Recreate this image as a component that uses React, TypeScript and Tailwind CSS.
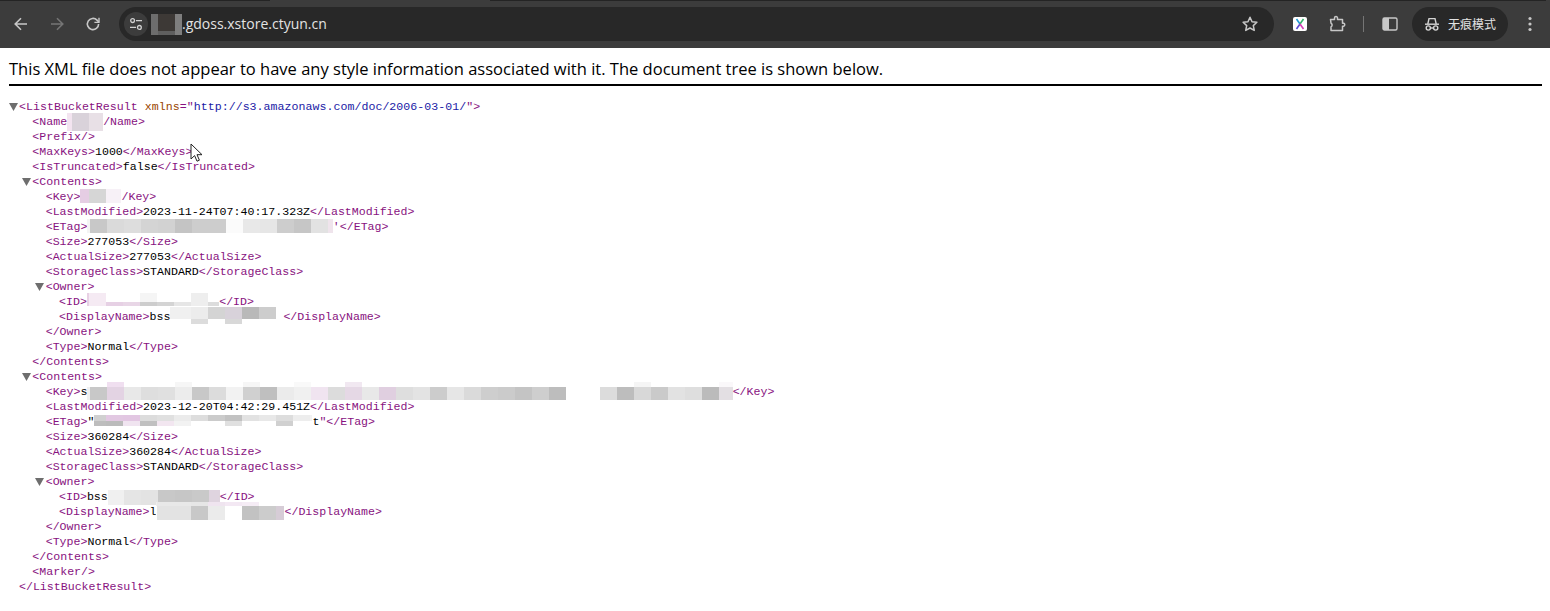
import React from "react";

const TAG = "text-[#881280]";
type Cell = [number, string, string?, string?];
type Piece = string | { text: string } | { attr: string } | { val: string } | { m: Cell[]; mt: number; h: number; top?: number; bot?: number };

const m = (mt: number, h: number, top: number, cells: Cell[], bot = 0) => ({ m: cells, mt, h, top, bot });

const Mosaic = ({ cells, mt, h, top = 0, bot = 0 }: { cells: Cell[]; mt: number; h: number; top?: number; bot?: number }) => (
  <span className="inline-flex items-start h-[15px] shrink-0">
    {cells.map((c, i) => (
      <span key={i} className="flex flex-col" style={{ width: c[0], marginTop: mt + 1 }}>
        <span style={{ height: top, background: c[2] ?? "transparent" }} />
        <span style={{ height: h, background: c[1] }} />
        <span style={{ height: bot, background: c[3] ?? "transparent" }} />
      </span>
    ))}
  </span>
);

const Caret = () => (
  <svg className="w-[9px] h-[8px] -ml-[10.5px] mr-[1.5px] shrink-0" viewBox="0 0 9 8">
    <path d="M0 0h9L4.5 8z" fill="#6e6e6e" />
  </svg>
);

const Row = ({ level, open, parts, wide }: { level: number; open?: boolean; parts: Piece[]; wide?: boolean }) => (
  <div className={`flex items-center h-[15px] whitespace-pre ${wide ? "tracking-[0.03px]" : ""}`} style={{ paddingLeft: 19 + level * 13.35 }}>
    {open && <Caret />}
    {parts.map((p, i) => {
      if (typeof p === "string") return <span key={i} className={TAG}>{p}</span>;
      if ("text" in p) return <span key={i} className="text-black">{p.text}</span>;
      if ("attr" in p) return <span key={i} className="text-[#994500]">{p.attr}</span>;
      if ("val" in p) return <span key={i} className="text-[#1a1aa6]">{p.val}</span>;
      return <Mosaic key={i} cells={p.m} mt={p.mt} h={p.h} top={p.top} bot={p.bot} />;
    })}
  </div>
);

const t = (text: string) => ({ text });

const xml: { level: number; open?: boolean; wide?: boolean; parts: Piece[] }[] = [
  { level: 0, open: true, wide: true, parts: ["<ListBucketResult", " ", { attr: "xmlns" }, "=\"", { val: "http://s3.amazonaws.com/doc/2006-03-01/" }, "\">"] },
  { level: 1, parts: ["<Name", m(-2, 18, 0, [[5, "#f3e4f0"], [17, "#d9d2da"], [14, "#e8e0e6"]]), "/Name>"] },
  { level: 1, parts: ["<Prefix/>"] },
  { level: 1, parts: ["<MaxKeys>", t("1000"), "</MaxKeys>"] },
  { level: 1, parts: ["<IsTruncated>", t("false"), "</IsTruncated>"] },
  { level: 1, open: true, parts: ["<Contents>"] },
  { level: 2, parts: ["<Key>", m(-1, 14, 0, [[9, "#e5cde3"], [17, "#d6d6d6"], [15, "#f7f1f7"]]), "/Key>"] },
  { level: 2, parts: ["<LastModified>", t("2023-11-24T07:40:17.323Z"), "</LastModified>"] },
  { level: 2, parts: ["<ETag>", m(-1, 14, 0, [[2.4, "#f4f4f4"], [17, "#c8c8c8"], [17, "#dadada"], [17, "#dddddd"], [17, "#d4d4d4"], [17, "#d2d2d2"], [17, "#c4c4c4"], [17, "#cdcdcd"], [17, "#cdcdcd"], [17, "#fbfbfb"], [17, "#e8e8e8"], [17, "#e6e6e6"], [17, "#cdcdcd"], [17, "#c6c6c6"], [17, "#e2e2e2"], [5, "#efe4ec"]]), "'</ETag>"] },
  { level: 2, parts: ["<Size>", t("277053"), "</Size>"] },
  { level: 2, parts: ["<ActualSize>", t("277053"), "</ActualSize>"] },
  { level: 2, parts: ["<StorageClass>", t("STANDARD"), "</StorageClass>"] },
  { level: 2, open: true, parts: ["<Owner>"] },
  { level: 3, parts: ["<ID>", m(-2, 4, 9, [[2.3, "#e8d0e4", "#e8d0e4"], [17, "#f5eaf3", "#f5eaf3"], [17, "#e6d0e4", "#fff"], [17, "#e8d6e6", "#fff"], [17, "#cdcdcd", "#f5f5f5"], [17, "#d4d4d4", "#fff"], [17, "#e6e6e6", "#fff"], [17, "#eeeeee", "#eeeeee"], [11, "#dcdcdc", "#fff"]]), "</ID>"] },
  { level: 3, parts: ["<DisplayName>", t("bss"), m(-3, 12, 0, [[21, "#f0f0f0"], [17, "#ececec", undefined, "#dcdcdc"], [17, "#d4d4d4"], [17, "#d8d2da", undefined, "#d8d8d8"], [17, "#b9b9b9"], [17, "#cdcdcd"], [7, "#fff"]], 5), "</DisplayName>"] },
  { level: 2, parts: ["</Owner>"] },
  { level: 2, parts: ["<Type>", t("Normal"), "</Type>"] },
  { level: 1, parts: ["</Contents>"] },
  { level: 1, open: true, parts: ["<Contents>"] },
  { level: 2, parts: ["<Key>", t("s"), m(-3, 13, 5, [[2.2, "#f0f0f0"], [17, "#c8c8c8"], [17, "#e3d3e3", "#f0dff0"], [17, "#e8e8e8"], [17, "#dedede"], [17, "#e0e0e0"], [17, "#ececec", "#f6f6f6"], [17, "#c8c8c8"], [17, "#dcdcdc"], [17, "#f2f2f2"], [17, "#d0d0d0", "#f6f6f6"], [17, "#bfbfbf"], [17, "#ebebeb"], [17, "#f0f0f0", "#f9f9f9"], [17, "#f0e4f0"], [17, "#dcdcdc"], [17, "#e5d8e5", "#f1e8f1"], [17, "#e8e8e8"], [17, "#e0cfe0"], [17, "#dedede"], [17, "#e3e3e3"], [17, "#cccccc"], [17, "#e6e6e6"], [17, "#dadada"], [17, "#cecece"], [17, "#cbcbcb"], [17, "#c4c4c4"], [17, "#cecece"], [17, "#bdbdbd"], [34, "#fff"], [17, "#dcdcdc"], [17, "#bdbdbd"], [17, "#d8d8d8", "#f5f5f5"], [17, "#cacaca"], [17, "#e2e2e2"], [17, "#dedede"], [17, "#bbbbbb"], [14, "#e3dfe3", "#faf8fa"]]), "</Key>"] },
  { level: 2, parts: ["<LastModified>", t("2023-12-20T04:42:29.451Z"), "</LastModified>"] },
  { level: 2, parts: ["<ETag>", t("\""), m(0, 5, 6, [[12, "#bdbdbd", "#d0d0d0"], [17, "#bbbbbb", "#e2c8e2"], [17, "#f0e4f0", "#e2c6e2"], [17, "#c0c0c0", "#dcdcdc"], [17, "#f2e6f0", "#e0e0e0"], [17, "#f2f2f2", "#ebebeb"], [17, "#ffffff", "#dddddd"], [17, "#ffffff", "#cbcbcb"], [17, "#e0e0e0", "#c2c2c2"], [17, "#ffffff", "#e2e2e2"], [17, "#ffffff", "#e8e8e8"], [17, "#d0d0d0", "#dddddd"], [17, "#ffffff", "#ededed"], [2, "#ffffff", "#f2f2f2"]]), t("t"), "\"</ETag>"] },
  { level: 2, parts: ["<Size>", t("360284"), "</Size>"] },
  { level: 2, parts: ["<ActualSize>", t("360284"), "</ActualSize>"] },
  { level: 2, parts: ["<StorageClass>", t("STANDARD"), "</StorageClass>"] },
  { level: 2, open: true, parts: ["<Owner>"] },
  { level: 3, parts: ["<ID>", t("bss"), m(0, 15, 0, [[16, "#f0f0f0"], [17, "#e5e5e5"], [17, "#e3e3e3"], [17, "#c8c8c8"], [17, "#c6c6c6"], [17, "#c9c9c9"], [11, "#dfd4df"]]), "</ID>"] },
  { level: 3, parts: ["<DisplayName>", t("l"), m(-3, 14, 4, [[1, "#fff", "#eeeeee"], [17, "#e3e3e3", "#e8e8e8"], [17, "#e3e3e3", "#e8e8e8"], [17, "#c8c8c8", "#e6e6e6"], [17, "#ebebeb", "#efe4ef"], [17, "#fff", "#f3e8f3"], [17, "#c2c2c2", "#f5ecf5"], [17, "#cccccc", "#fff"], [8, "#d6ccd6", "#fff"]]), "</DisplayName>"] },
  { level: 2, parts: ["</Owner>"] },
  { level: 2, parts: ["<Type>", t("Normal"), "</Type>"] },
  { level: 1, parts: ["</Contents>"] },
  { level: 1, parts: ["<Marker/>"] },
  { level: 0, parts: ["</ListBucketResult>"] },
];

const IconBtn = ({ children, className = "" }: { children: React.ReactNode; className?: string }) => (
  <div className={`w-9 h-9 flex items-center justify-center shrink-0 ${className}`}>{children}</div>
);

const Toolbar = () => (
  <div className="relative h-[48px] bg-[#3c3c3c] flex items-center pl-[3px] pr-[2px] shrink-0" style={{ fontFamily: '"Open Sans", "Noto Sans CJK SC", sans-serif' }}>
    <div className="absolute left-0 top-0 w-[270px] h-px bg-[#242424]" />
    <div className="absolute left-[490px] right-[4px] top-0 h-px bg-[#242424]" />
    <IconBtn>
      <svg width="16" height="16" viewBox="0 0 16 16" fill="none" stroke="#c7c7c7" strokeWidth="1.6"><path d="M14 8H2.5M8 2.2 2.2 8 8 13.8" /></svg>
    </IconBtn>
    <IconBtn>
      <svg width="16" height="16" viewBox="0 0 16 16" fill="none" stroke="#757575" strokeWidth="1.6"><path d="M2 8h11.5M8 2.2 13.8 8 8 13.8" /></svg>
    </IconBtn>
    <IconBtn>
      <svg width="16" height="16" viewBox="0 0 16 16" fill="none" stroke="#c7c7c7" strokeWidth="1.6"><path d="M13.6 8a5.6 5.6 0 1 1-1.6-3.9L13.8 6" /><path d="M14 1.8V6.4H9.4" strokeWidth="1.4" /></svg>
    </IconBtn>
    <div className="ml-[8px] h-[34px] w-[1155px] rounded-full bg-[#282828] flex items-center pl-[5px] pr-[15px] shrink-0">
      <div className="w-6 h-6 rounded-full bg-[#3c3c3c] flex items-center justify-center shrink-0">
        <svg width="14" height="14" viewBox="0 0 14 14" fill="none" stroke="#d0d0d0" strokeWidth="1.3"><circle cx="3.6" cy="3.6" r="1.9" /><path d="M7 3.6h6M1 10.4h6" /><circle cx="10.4" cy="10.4" r="1.9" /></svg>
      </div>
      <div className="ml-[3px] flex flex-col w-[31px] h-[21px] shrink-0">
        <div className="h-[17px] flex">
          <div className="w-[7px] bg-[#6d6d6d]" />
          <div className="w-[17px] bg-[#3d3936]" />
          <div className="w-[7px] bg-[#7e7e7e]" />
        </div>
        <div className="h-[4px] flex">
          <div className="w-[7px] bg-[#6d6d6d]" />
          <div className="w-[17px] bg-[#5f5f5f]" />
          <div className="w-[7px] bg-[#7e7e7e]" />
        </div>
      </div>
      <span className="text-[14px] text-[#e3e3e3] pb-[2px]" style={{ fontFamily: '"Open Sans", sans-serif' }}>.gdoss.xstore.ctyun.cn</span>
      <svg className="ml-auto" width="18" height="18" viewBox="0 0 24 24" fill="none" stroke="#c7c7c7" strokeWidth="2" strokeLinejoin="round"><path d="m12 3 2.7 6 6.5.7-4.8 4.4 1.3 6.4L12 17.3 6.3 20.5l1.3-6.4L2.8 9.7 9.3 9z" /></svg>
    </div>
    <div className="ml-[19px] w-[14px] h-[14px] bg-white rounded-[2px] flex items-center justify-center shrink-0">
      <svg width="12" height="12" viewBox="0 0 12 12" fill="none" strokeWidth="1.6"><path d="M2.5 1 6 6" stroke="#1f9ad6" /><path d="M9.5 1 6 6" stroke="#35b36b" /><path d="M2.5 11 6 6" stroke="#5b4bd6" /><path d="M9.5 11 6 6" stroke="#d63fb6" /></svg>
    </div>
    <IconBtn className="ml-[12px]">
      <svg width="18" height="18" viewBox="0 0 18 18" fill="none" stroke="#c7c7c7" strokeWidth="1.5" strokeLinejoin="round"><path d="M2.5 4.5h4V3a1.5 1.5 0 0 1 3 .1v1.4h5v3.7h1.2a1.6 1.6 0 0 1 0 3h-1.2v4.3H3v-3.7a2 2 0 0 0 0-3.6z" /></svg>
    </IconBtn>
    <div className="ml-[8px] w-px h-4 bg-[#757575] shrink-0" />
    <IconBtn className="ml-[8px]">
      <svg width="16" height="16" viewBox="0 0 16 16"><rect x="1" y="2" width="14" height="12" rx="1.5" fill="none" stroke="#c7c7c7" strokeWidth="1.4" /><rect x="1" y="2" width="6" height="12" fill="#c7c7c7" /></svg>
    </IconBtn>
    <div className="ml-[4px] h-[34px] w-[96px] rounded-full bg-[#282828] flex items-center pl-[12px] shrink-0">
      <svg width="16" height="16" viewBox="0 0 16 16" fill="none" stroke="#d4d4d4" strokeWidth="1.4"><path d="M1 8.2h14" /><path d="M3.8 8l1.2-5.4h6L12.2 8" /><circle cx="4.3" cy="12" r="2.1" /><circle cx="11.7" cy="12" r="2.1" /><path d="M6.4 12h3.2" /></svg>
      <span className="ml-[8px] text-[12px] text-[#e3e3e3]" style={{ fontFamily: '"Noto Sans CJK SC", sans-serif' }}>无痕模式</span>
    </div>
    <IconBtn className="ml-[4px]">
      <svg width="4" height="16" viewBox="0 0 4 16" fill="#c7c7c7"><circle cx="2" cy="2.5" r="1.6" /><circle cx="2" cy="8" r="1.6" /><circle cx="2" cy="13.5" r="1.6" /></svg>
    </IconBtn>
  </div>
);

export default function App() {
  return (
    <div className="relative w-[1550px] h-[611px] overflow-hidden bg-white flex flex-col">
      <Toolbar />
      <div className="pl-[9px] pr-[8px]">
        <div className="h-[38px] border-b-2 border-black flex items-center pt-[7px] text-[16.53px] text-black" style={{ fontFamily: '"Open Sans", sans-serif' }}>
          This XML file does not appear to have any style information associated with it. The document tree is shown below.
        </div>
      </div>
      <div className="pt-[13px] text-[11.6px] leading-[15px]" style={{ fontFamily: '"Liberation Mono", monospace' }}>
        {xml.map((r, i) => <Row key={i} {...r} />)}
      </div>
      <svg className="absolute left-[190px] top-[143px]" width="14" height="20" viewBox="0 0 14 20">
        <path d="M1 1v15l3.6-3.4 2.4 5.6 2.4-1-2.4-5.5h5z" fill="#fff" stroke="#222" strokeWidth="1" />
      </svg>
    </div>
  );
}
